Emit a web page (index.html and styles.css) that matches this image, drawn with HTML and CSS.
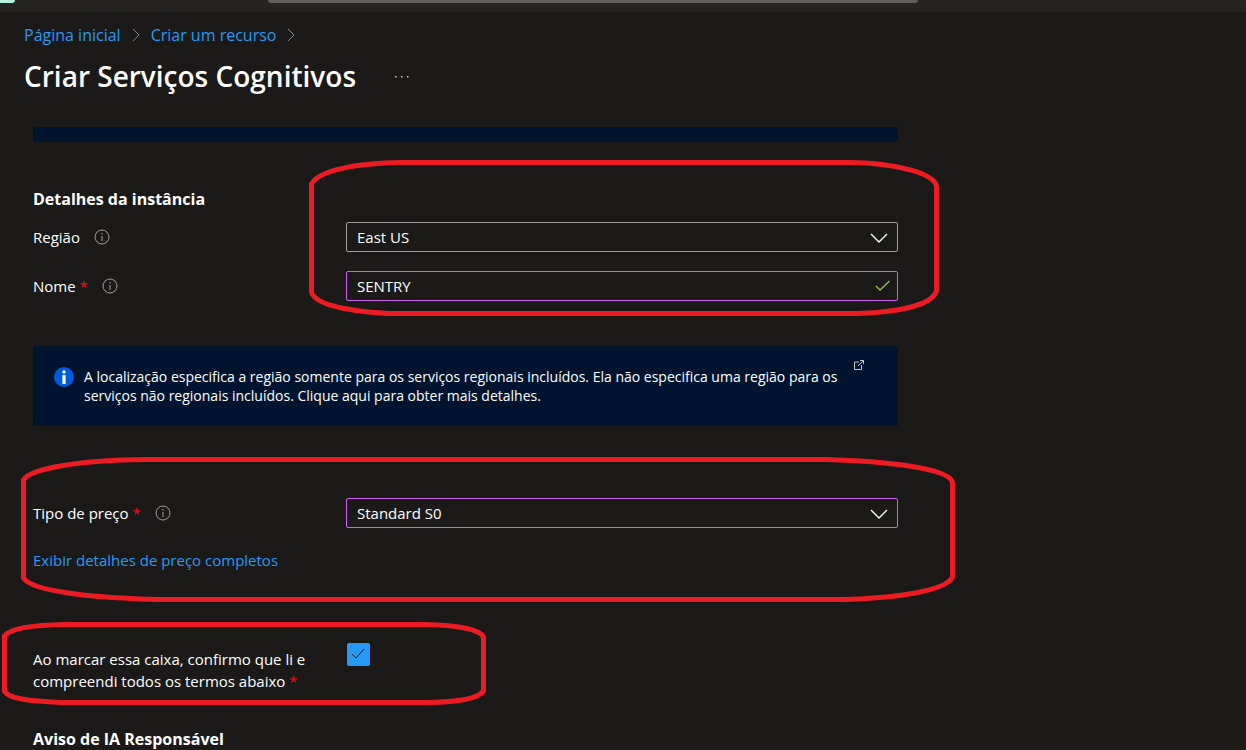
FILE: index.html
```html
<!DOCTYPE html>
<html lang="pt">
<head>
<meta charset="utf-8">
<title>Criar Serviços Cognitivos</title>
<link rel="stylesheet" href="styles.css">
</head>
<body>
<header class="topbar">
  <span class="brand"></span>
  <span class="search"></span>
</header>
<main class="page">
  <nav class="crumbs">
    <a href="#">Página inicial</a>
    <svg width="8" height="14" viewBox="0 0 8 14"><path d="M1 1l6 6-6 6"/></svg>
    <a href="#">Criar um recurso</a>
    <svg width="8" height="14" viewBox="0 0 8 14"><path d="M1 1l6 6-6 6"/></svg>
  </nav>
  <div class="title-row">
    <h1>Criar Serviços Cognitivos</h1>
    <button class="more" type="button" aria-label="Mais">
      <svg width="14" height="2" viewBox="0 0 14 2"><path d="M0 0h1.500v1.500H0zM6 0h1.500v1.500H6zM12 0h1.500v1.500h-1.500z"/></svg>
    </button>
  </div>
  <form class="form">
    <div class="banner-end"></div>
    <h2>Detalhes da instância</h2>
    <div class="fields">
      <div class="field">
        <div class="label">
          <label for="region">Região</label>
          <svg class="info" width="16" height="16" viewBox="0 0 16 16"><circle cx="8" cy="8" r="7"/><path d="M8 7v5M8 4v1.5"/></svg>
        </div>
        <div class="control">
          <select id="region"><option>East US</option></select>
          <svg class="chevron" width="18" height="10" viewBox="0 0 18 10"><path d="M1 1l8 8 8-8"/></svg>
        </div>
      </div>
      <div class="field">
        <div class="label">
          <label for="name">Nome <span class="req">*</span></label>
          <svg class="info" width="16" height="16" viewBox="0 0 16 16"><circle cx="8" cy="8" r="7"/><path d="M8 7v5M8 4v1.5"/></svg>
        </div>
        <div class="control edited">
          <input id="name" type="text" value="SENTRY">
          <svg class="valid" width="16" height="12" viewBox="0 0 16 12"><path d="M1 6l4 4L14.500 1"/></svg>
        </div>
      </div>
    </div>
    <div class="banner">
      <svg class="banner-icon" width="20" height="20" viewBox="0 0 20 20"><circle cx="10" cy="10" r="10" fill="#015cda"/><circle cx="10" cy="5" r="1.700" fill="#fff"/><path d="M8.400 8h3.200v9H8.400z" fill="#fff"/></svg>
      <p>A localização especifica a região somente para os serviços regionais incluídos. Ela não especifica uma região para os serviços não regionais incluídos. Clique aqui para obter mais detalhes.</p>
      <svg class="external" width="12" height="12" viewBox="0 0 12 12"><path d="M6 3H1.500v7.500h7V6M5 7l5.500-5.500M7 1.500h3.500V5"/></svg>
    </div>
    <div class="field">
      <div class="label">
        <label for="tier">Tipo de preço <span class="req">*</span></label>
        <svg class="info" width="16" height="16" viewBox="0 0 16 16"><circle cx="8" cy="8" r="7"/><path d="M8 7v5M8 4v1.5"/></svg>
      </div>
      <div class="control edited">
        <select id="tier"><option>Standard S0</option></select>
        <svg class="chevron" width="18" height="10" viewBox="0 0 18 10"><path d="M1 1l8 8 8-8"/></svg>
      </div>
    </div>
    <a class="pricing" href="#">Exibir detalhes de preço completos</a>
    <div class="field consent">
      <label for="terms">Ao marcar essa caixa, confirmo que li e<br>compreendi todos os termos abaixo <span class="req">*</span></label>
      <div class="tick">
        <input id="terms" type="checkbox" checked>
        <svg width="14" height="12" viewBox="0 0 14 12"><path d="M1 6l4 4L13 1"/></svg>
      </div>
    </div>
    <h2>Aviso de IA Responsável</h2>
  </form>
</main>
<svg class="marks" width="1246" height="750" viewBox="0 0 1246 750">
  <path d="M311.500 184C318 171 354 163 402 162.500H850C895 163 934 173 936.500 186V291C932 305 900 312 858 313.500H388C348 311 315 305 311.500 292Z"/>
  <path d="M23.500 480C30 468 82 460 146 459.500H826C884 461 948 468 952.500 482V577C946 591 896 598 842 599.500H160C98 598 32 592 23.500 578Z"/>
  <path d="M4.500 636C10 628 34 625 66 624.500H424C456 625 480 629 483.500 637V691C478 699 456 702 428 702.500H60C32 701 8 699 4.500 691Z"/>
</svg>
</body>
</html>
```
FILE: styles.css
```css
* { box-sizing: border-box; }
body {
  margin: 0;
  position: relative;
  background: #1b1a19;
  color: #fff;
  font: 15px/22px "Open Sans", "Noto Sans", sans-serif;
}
h1, h2, p { margin: 0; }
a { color: #2899f5; text-decoration: none; }
svg { display: block; flex: none; fill: none; }
.topbar {
  display: grid;
  grid-template-columns: 15px 650px;
  column-gap: 253px;
  height: 12px;
  background: #252423;
}
.brand, .search { height: 3px; }
.brand { background: #b4f5df; border-radius: 0 0 3px 0; }
.search { background: #605e5c; border-radius: 0 0 3px 3px; }
.page { padding: 11px 24px 0; }
.crumbs {
  display: flex;
  align-items: center;
  gap: 11px;
  font-size: 16px;
  line-height: 24px;
}
.crumbs svg { stroke: #8a8886; }
.title-row { display: flex; align-items: center; gap: 39px; margin-top: 9px; }
h1 { font-size: 28px; line-height: 40px; font-weight: 600; }
.more { padding: 2px 0 0; border: 0; background: none; }
.more svg { fill: #c8c6c4; }
.form { max-width: 874px; padding-left: 9px; margin-top: 31px; }
.banner-end { height: 15px; background: #00142f; border-radius: 0 0 2px 2px; }
h2 { font-size: 16px; line-height: 24px; font-weight: 700; }
.banner-end + h2 { margin-top: 45px; }
.fields { display: grid; gap: 19px; margin-top: 11px; }
.field {
  display: grid;
  grid-template-columns: 313px 1fr;
  align-items: center;
}
.label { display: flex; align-items: center; gap: 14px; }
.info { stroke: #a19f9d; }
.req { color: #e81123; }
.control { position: relative; }
.control select, .control input {
  display: block;
  width: 100%;
  height: 30px;
  padding: 0 10px;
  border: 1px solid #a19f9d;
  border-radius: 2px;
  background: #1b1a19;
  color: #fff;
  font: inherit;
  appearance: none;
}
.edited select, .edited input { border-color: #d25fee; }
.chevron, .valid { position: absolute; top: 11px; pointer-events: none; }
.chevron { right: 10px; stroke: #fff; stroke-width: 1.3; }
.valid { right: 7px; top: 9px; stroke: #92c353; stroke-width: 1.3; }
.banner {
  display: flex;
  height: 80px;
  margin: 45px 0 72px;
  padding: 21px 33px 20px 21px;
  border-radius: 2px;
  background: #00142f;
  font-size: 14px;
  line-height: 19px;
}
.banner p { flex: 1; margin-left: 10px; }
.external { margin: -8px 0 0 3px; stroke: #c8c6c4; }
.pricing { display: block; margin-top: 21px; }
.consent { align-items: start; margin-top: 72px; }
.consent label { padding-top: 5px; }
.tick { position: relative; width: 23px; height: 23px; margin-left: 1px; }
.tick input {
  display: block;
  width: 23px;
  height: 23px;
  margin: 0;
  border-radius: 2px;
  background: #2899f5;
  appearance: none;
}
.tick svg { position: absolute; top: 5px; left: 4px; stroke: #1b1a19; pointer-events: none; }
.consent + h2 { margin-top: 35px; }
.marks { position: absolute; top: 0; left: 0; stroke: #ed1c24; stroke-width: 5; pointer-events: none; }
```
